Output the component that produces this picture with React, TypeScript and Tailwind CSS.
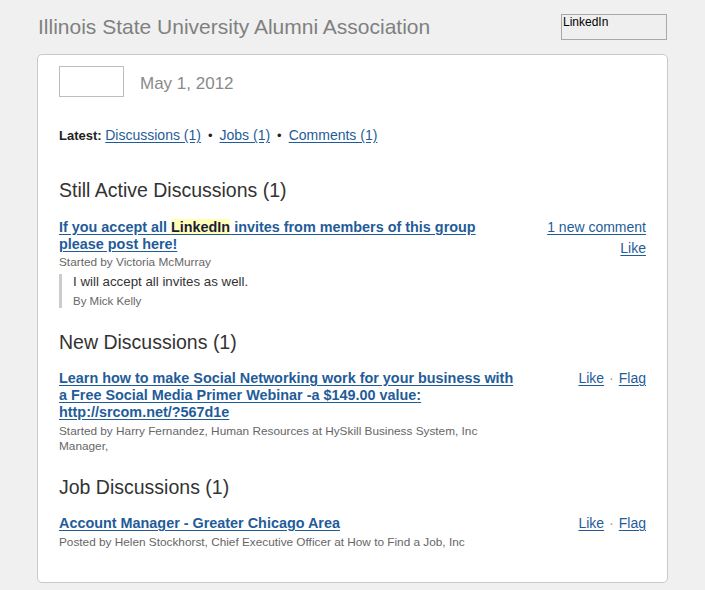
import React from 'react';

const link = 'text-[#1f5c99] underline underline-offset-2';
const title = `${link} block text-[14.4px] font-bold leading-[17px]`;
const meta = 'text-[11.8px] leading-[15px] text-[#666]';

function Actions({ items }: { items: string[] }) {
  return (
    <div className="text-[14px] leading-[17px]">
      {items.map((it, i) => (
        <React.Fragment key={it}>
          {i > 0 && <span className="mx-[5px] text-[#999]">·</span>}
          <a className={link}>{it}</a>
        </React.Fragment>
      ))}
    </div>
  );
}

function Heading({ children }: { children: React.ReactNode }) {
  return <h2 className="text-[19.5px] leading-[24px] text-[#333]">{children}</h2>;
}

export default function App() {
  return (
    <div className="min-h-[590px] w-[705px] bg-[#f0f0f0] pb-[8px] font-['Liberation_Sans',Arial,sans-serif]">
      <div className="flex items-start pl-[38px] pr-[38px] pt-[14px]">
        <h1 className="flex-1 pt-[1px] text-[21px] leading-[24px] text-[#808080]">
          Illinois State University Alumni Association
        </h1>
        <div className="h-[26px] w-[106px] border border-[#a8a8a8] bg-[#efefef] pl-[1px] text-[12px] leading-[15px] text-black">
          LinkedIn
        </div>
      </div>

      <div className="mx-[37px] mt-[14px] rounded-[5px] border border-[#c9c9c9] bg-white px-[21px] pb-[32px] pt-[11px]">
        <div className="flex items-center">
          <div className="h-[31px] w-[65px] border border-[#bdbdbd]" />
          <span className="ml-[16px] mt-[5px] text-[17px] text-[#8a8a8a]">May 1, 2012</span>
        </div>

        <div className="mt-[30px] text-[13px] leading-[16px] text-[#222]">
          <b>Latest:</b>{' '}
          <a className={`${link} text-[14px]`}>Discussions (1)</a>
          <span className="mx-[7px]">•</span>
          <a className={`${link} text-[14px]`}>Jobs (1)</a>
          <span className="mx-[7px]">•</span>
          <a className={`${link} text-[14px]`}>Comments (1)</a>
        </div>

        <div className="mt-[34px]">
          <Heading>Still Active Discussions (1)</Heading>
          <div className="mt-[17px] flex">
            <div className="w-[470px]">
              <a className={title}>
                If you accept all <span className="bg-[#ffffb8] text-[#1c1c3c]">LinkedIn</span> invites
                from members of this group
                <br />
                please post here!
              </a>
              <p className={`mt-[2px] ${meta}`}>Started by Victoria McMurray</p>
              <div className="mt-[4px] border-l-[3px] border-[#cccccc] pl-[11px]">
                <p className="text-[13.3px] leading-[16px] text-[#333]">I will accept all invites as well.</p>
                <p className="mt-[4px] text-[11.5px] leading-[14px] text-[#666]">By Mick Kelly</p>
              </div>
            </div>
            <div className="flex flex-1 flex-col items-end">
              <Actions items={['1 new comment']} />
              <div className="mt-[4px]">
                <Actions items={['Like']} />
              </div>
            </div>
          </div>
        </div>

        <div className="mt-[22px]">
          <Heading>New Discussions (1)</Heading>
          <div className="mt-[16px] flex">
            <div className="w-[470px]">
              <a className={title}>
                Learn how to make Social Networking work for your business with
                <br />
                a Free Social Media Primer Webinar -a $149.00 value:
                <br />
                http://srcom.net/?567d1e
              </a>
              <p className={`mt-[3px] ${meta}`}>
                Started by Harry Fernandez, Human Resources at HySkill Business System, Inc
                <br />
                Manager,
              </p>
            </div>
            <div className="flex flex-1 justify-end">
              <Actions items={['Like', 'Flag']} />
            </div>
          </div>
        </div>

        <div className="mt-[21px]">
          <Heading>Job Discussions (1)</Heading>
          <div className="mt-[16px] flex">
            <div className="w-[470px]">
              <a className={title}>Account Manager - Greater Chicago Area</a>
              <p className={`mt-[3px] ${meta}`}>
                Posted by Helen Stockhorst, Chief Executive Officer at How to Find a Job, Inc
              </p>
            </div>
            <div className="flex flex-1 justify-end">
              <Actions items={['Like', 'Flag']} />
            </div>
          </div>
        </div>
      </div>
    </div>
  );
}
